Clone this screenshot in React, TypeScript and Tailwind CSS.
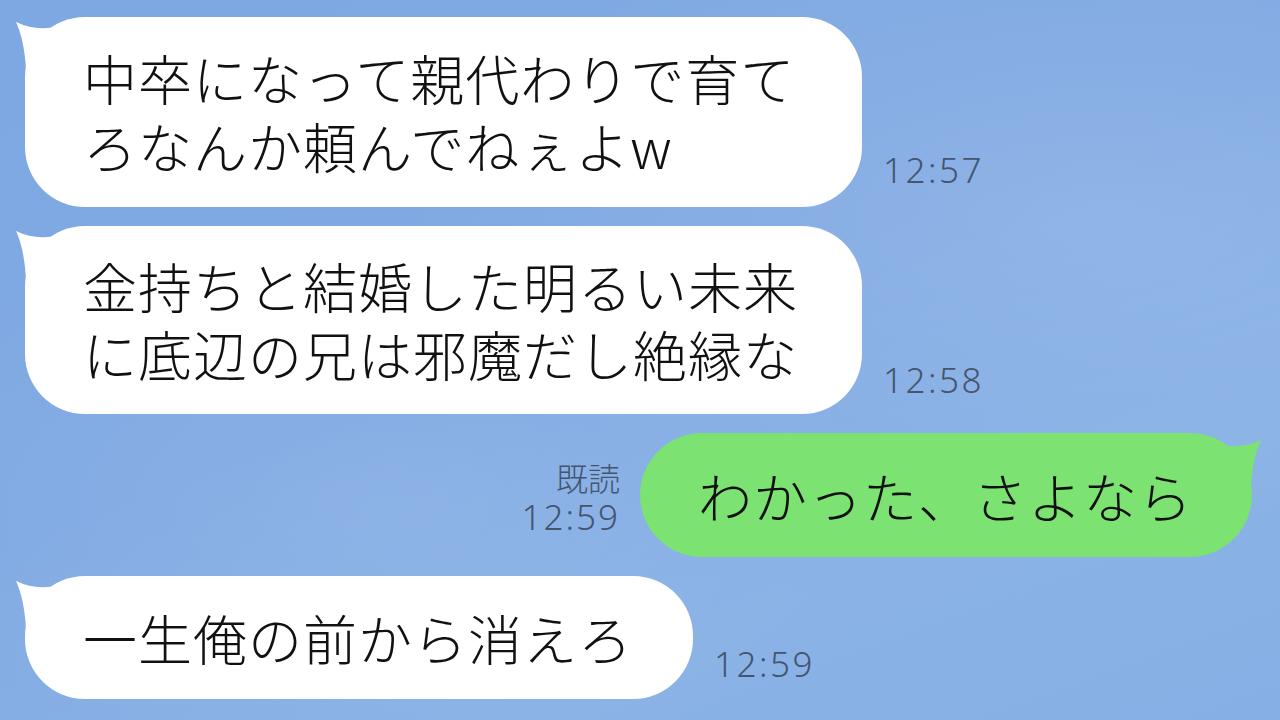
import React from "react";

const jp = { fontFamily: '"Noto Sans CJK JP", "Noto Sans", sans-serif' };
const num = { fontFamily: '"Noto Sans", "Noto Sans CJK JP", sans-serif' };

function TailLeft() {
  return (
    <svg
      className="absolute left-[-12px] top-0 overflow-visible"
      width="60"
      height="60"
      viewBox="0 0 60 60"
    >
      <path d="M3 5 Q24 15 46 9 L46 52 L13 52 Q11 22 3 5 Z" fill="#ffffff" />
    </svg>
  );
}

function TailRight() {
  return (
    <svg
      className="absolute right-[-12px] top-0 overflow-visible"
      width="60"
      height="60"
      viewBox="0 0 60 60"
    >
      <path d="M57 7 Q36 17 14 11 L14 52 L47 52 Q49 24 57 7 Z" fill="#7ce272" />
    </svg>
  );
}

function Incoming({
  lines,
  width,
  height,
  time,
  timeGap,
}: {
  lines: string[];
  width: number;
  height: number;
  time: string;
  timeGap: number;
}) {
  return (
    <div className="flex items-end">
      <div
        className="relative flex flex-col justify-center rounded-[60px] bg-white pl-[58px] text-[54px] font-light leading-[68px] tracking-[1px] text-[#111111] whitespace-nowrap"
        style={{ ...jp, width, height }}
      >
        <TailLeft />
        {lines.map((l) => (
          <div key={l} className="relative">
            {l}
          </div>
        ))}
      </div>
      <div
        className="ml-[21px] text-[35px] font-light leading-none tracking-[2.5px] text-[#44556f]"
        style={{ ...num, marginBottom: timeGap }}
      >
        {time}
      </div>
    </div>
  );
}

export default function App() {
  return (
    <div className="relative h-[720px] w-[1280px] overflow-hidden bg-[linear-gradient(160deg,#7ea8e2_0%,#81aae3_45%,#8ab2e6_75%,#86b0e5_100%)]">
      <div className="pointer-events-none absolute inset-0 bg-[radial-gradient(ellipse_at_85%_30%,rgba(255,255,255,0.10),transparent_45%),radial-gradient(ellipse_at_30%_70%,rgba(255,255,255,0.07),transparent_40%)]" />
      <div className="relative flex flex-col gap-[19px] pl-[25px] pr-[28px] pt-[17px]">
        <Incoming
          lines={["中卒になって親代わりで育て", "ろなんか頼んでねぇよw"]}
          width={837}
          height={190}
          time="12:57"
          timeGap={20}
        />
        <Incoming
          lines={["金持ちと結婚した明るい未来", "に底辺の兄は邪魔だし絶縁な"]}
          width={837}
          height={188}
          time="12:58"
          timeGap={17}
        />
        <div className="flex items-end justify-end">
          <div className="mb-[20px] mr-[20px] flex flex-col items-end text-[#44556f]">
            <div className="text-[32px] font-light leading-[40px]" style={jp}>
              既読
            </div>
            <div
              className="text-[35px] font-light leading-[40px] tracking-[2px]"
              style={num}
            >
              12:59
            </div>
          </div>
          <div
            className="relative flex h-[124px] w-[612px] items-center rounded-[62px] bg-[#7ce272] pl-[58px] text-[54px] font-light tracking-[1px] text-[#111111] whitespace-nowrap"
            style={jp}
          >
            <TailRight />
            <span className="relative">わかった、さよなら</span>
          </div>
        </div>
        <Incoming
          lines={["一生俺の前から消えろ"]}
          width={668}
          height={123}
          time="12:59"
          timeGap={18}
        />
      </div>
    </div>
  );
}
